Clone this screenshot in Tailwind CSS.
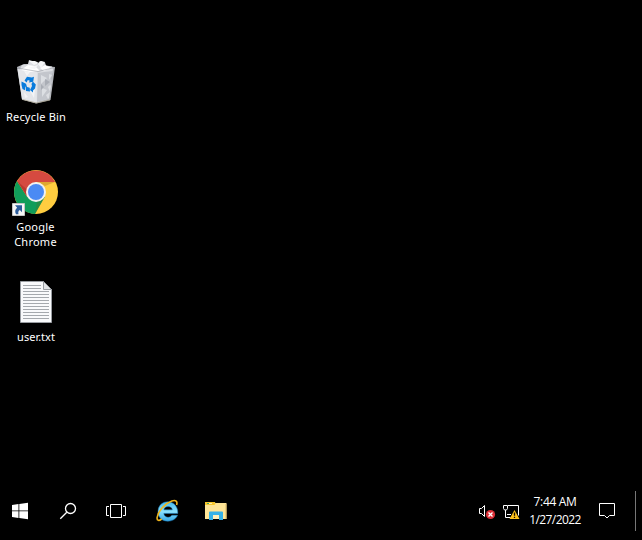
<!DOCTYPE html>
<html lang="en">
<head>
<meta charset="utf-8">
<title>Desktop</title>
<script src="https://cdn.jsdelivr.net/npm/@tailwindcss/browser@4"></script>
</head>
<body class="bg-black text-white overflow-hidden">
<div class="w-[642px] h-[540px] flex flex-col bg-black font-['Noto_Sans','Open_Sans',sans-serif]">
  <main class="h-[482px] w-[72px] pt-[55px] flex flex-col text-[11px] leading-[15px] text-center">
    <div class="h-[110px] flex flex-col items-center">
      <svg class="w-[52px] h-[54px] shrink-0" viewBox="10 55 52 54">
        <path d="M17 67 24 64 55 67 50.500 100 36 103.500 22 99.500Z" fill="#b3b6bb"/>
        <path d="m20 69 2-4 6-1 1-4 5 1.500 4 2 2-2.500 5 1.500 1 3 6 1 1 3-3 12 1 5-2 12-13 4-13-3.500-4-28Z" fill="#dcdee2"/>
        <path d="M17.500 69 37 72 36.500 103 22 99.500Z" fill="#e4e6ea"/>
        <path d="m38 73 6-1 9-1-2 7 1 5-4 4 2 5-4 3 2 4-11 3Z" fill="#c3c6cc"/>
        <path d="m21 70 7-5 7 1 5 5-10 1Zm19-2 5-3 6 3-7 3Z" fill="#fff"/>
        <path d="m29 61 5 4 5-2-4-2Zm9 3 3 4 4-6-4-1Zm-10 4 7 1 3-4" fill="#f6f7f8"/>
        <path d="m41 75 6 3-6 6Zm1 13 5 2-5 7Zm7-14 3 1-3 5Z" fill="#dcdfe3"/>
        <path d="m45 79 5 3-5 4Zm-4 5 3 3-3 3Z" fill="#a9adb5"/>
        <path d="m24 71 6 1-3 4Zm6 20 5-2-1 9Zm-6 1 4 5-3 1Z" fill="#f3f4f6"/>
        <path d="M17.500 68 38 71.500 54.500 67.500" fill="none" stroke="#989ca4" stroke-width=".6"/>
        <path d="M22.500 99.500 36.500 103 50 100" fill="none" stroke="#aaa391" stroke-width=".8"/>
        <g fill="#087bdc"><path d="m24.500 80.500 2.500-3.700 4.800.7 2.200-.7-.8 5-4.400.7 1-1.700-2-.8-1.200 2.500Z"/><path d="m21.500 81.500 4.500 2.300 1 3.200-2-.2v3.500l-2.500-1.300-1-4Z"/><path d="m25.500 86.500 4.200 1.200.3 3.800-4-.5Z"/><path d="m32 86-2 4 3 2.500v-2l2-2 .8-4-3-3-1.300 2.500Z"/></g>
      </svg>
      <span class="tracking-[0.2px] whitespace-nowrap">Recycle Bin</span>
    </div>
    <div class="h-[110px] flex flex-col items-center">
      <svg class="w-[52px] h-[54px] shrink-0" viewBox="10 165 52 54">
        <circle cx="36" cy="192" r="22" fill="#ffcd40"/>
        <path d="M36 192 44.7 197 35 214A22 22 0 0 1 17 181L27.3 197Z" fill="#109d5a"/>
        <path d="M17 181A22 22 0 0 1 55.2 182H36L27.3 197Z" fill="#d54a40"/>
        <path d="M17 181 27.3 197 26.5 189Z" fill="#a93027" opacity=".6"/>
        <path d="M36 182h19l-10 4Z" fill="#ad701f" opacity=".4"/>
        <path d="m44.7 197-9.7 17 2-13Z" fill="#4d7424" opacity=".35"/>
        <circle cx="36" cy="192" r="10" fill="#f1f1f1"/>
        <circle cx="36" cy="192" r="8" fill="#4a8af4"/>
        <path d="M12.5 203.5h12v12h-12Z" fill="#f7f7f7" stroke="#c4c4c4"/>
        <path d="M15 205.300h7v7l-2.200-2.200c-1.500 1-1.800 2.200-1.300 4.200h-2.500c-1.500-2.700-.8-5.200 1.200-6.600Z" fill="#2d5d9c"/>
      </svg>
      <span class="tracking-[0.25px] -translate-x-[0.5px]">Google<br>Chrome</span>
    </div>
    <div class="h-[110px] flex flex-col items-center">
      <svg class="w-[52px] h-[54px] shrink-0" viewBox="10 275 52 54">
        <path d="M20.500 281.500h23l8 8v33h-31Z" fill="#f9fafc" stroke="#999da2"/>
        <path d="M43.500 281.500v8h8Z" fill="#e2e4e7" stroke="#999da2"/>
        <path d="M23 285.500h18M23 288.500h18M23 291.500h26M23 294.500h26M23 297.500h26M23 300.500h26M23 303.500h26M23 306.500h26M23 309.500h26M23 312.500h26M23 315.500h26M23 318.500h26" stroke="#a5a9ae"/>
      </svg>
      <span>user.txt</span>
    </div>
  </main>
  <footer class="h-[58px] flex items-stretch">
    <svg class="w-[40px] h-[58px]" viewBox="0 482 40 58"><path d="m12 505 6.500-1v6.500H12Zm7.300-1.100L28 502.700v7.800h-8.700ZM12 511.300h6.500v6.700l-6.500-1Zm7.300 0H28v7.900l-8.700-1.200Z" fill="#fff"/></svg>
    <svg class="w-[52px] h-[58px]" viewBox="40 482 52 58"><g fill="none" stroke="#fff" stroke-width="1.300"><circle cx="70.500" cy="508.500" r="5"/><path d="m66.800 512.200-6.500 6.500"/></g></svg>
    <svg class="w-[48px] h-[58px]" viewBox="92 482 48 58"><path d="M110.500 504.500h11v13h-11ZM109 506.500h-2.500v9h2.500M123 506.500h2.500v9H123" fill="none" stroke="#fff"/></svg>
    <svg class="w-[52px] h-[58px]" viewBox="140 482 52 58">
      <defs><linearGradient id="ie" x2="0" y2="1"><stop stop-color="#42b8ed"/><stop offset=".5" stop-color="#8be0fc"/><stop offset="1" stop-color="#37a9e6"/></linearGradient></defs>
      <path d="M177.800 513.500H163.800c.5 4.500 6.500 4.800 8 1.800h5.800c-3.600 8.700-19.600 8-19.600-3.600 0-13.500 20.400-13.700 19.800 1.800ZM163.900 509.800h8.400c-.4-4.300-7.900-4.300-8.400 0Z" fill="url(#ie)" stroke="#1878b8" stroke-width=".5"/>
      <path d="M176.600 505c1.200-3.800-.8-5.300-4.800-4-7 2.500-13.700 10-14.700 16.500-.4 3.500 2 3.500 4.600 1.500" fill="none" stroke="#efb51c" stroke-width="1.600"/>
    </svg>
    <svg class="w-[48px] h-[58px]" viewBox="192 482 48 58">
      <path d="M205 502h9.500l1 1H226.500v16H205Z" fill="#ffe596"/>
      <path d="M205 502h9.500l1 1.500-1 1.500H205Z" fill="#f8c72c"/><path d="M207 503h5v1h-5Z" fill="#fff0b0"/><path d="M207 503h2v1h-2Z" fill="#3ba86b"/>
      <path d="M226 504v15" stroke="#d9ba68"/><path d="M209 512.500q0-1 1-1h12q1 0 1 1V520h-4v-5h-6v5h-4Z" fill="#35b2e7"/><path d="M213 515h6v4h-6Z" fill="#fff0bb"/>
    </svg>
    <svg class="w-[60px] h-[58px] ml-[230px]" viewBox="470 482 60 58">
      <path d="M479.500 508.500h2l3-3v11l-3-3h-2Z" fill="none" stroke="#fff"/>
      <circle cx="490.500" cy="514.500" r="4.600" fill="#dc3038"/><path d="m488.500 512.500 4 4m0-4-4 4" stroke="#fff" stroke-width="1.300"/>
      <path d="M508 505.500h10.500v10M505.500 510v7.500h5M503.500 505.500h4v3l-1 1.500h-2l-1-1.500ZM507 514.500h4" fill="none" stroke="#fff"/>
      <path d="m514.500 510 5 9h-10Z" fill="#ffc21c"/><path d="M514.500 512.500v3.200m0 1.100v1.200" stroke="#171000" stroke-width="1.300"/>
    </svg>
    <div class="w-[50px] pt-[11px] flex flex-col items-center text-[12px] leading-[18px] whitespace-nowrap font-['Open_Sans',sans-serif]">
      <span class="tracking-[-0.35px]">7:44 AM</span><span class="tracking-[-0.6px]">1/27/2022</span>
    </div>
    <svg class="w-[62px] h-[58px]" viewBox="580 482 62 58"><path d="M599.500 503.500h15v12h-5l-2.500 2.500-2.500-2.500h-5Z" fill="none" stroke="#fff"/><path d="M635.500 491v40" stroke="#777"/></svg>
  </footer>
</div>
</body>
</html>
